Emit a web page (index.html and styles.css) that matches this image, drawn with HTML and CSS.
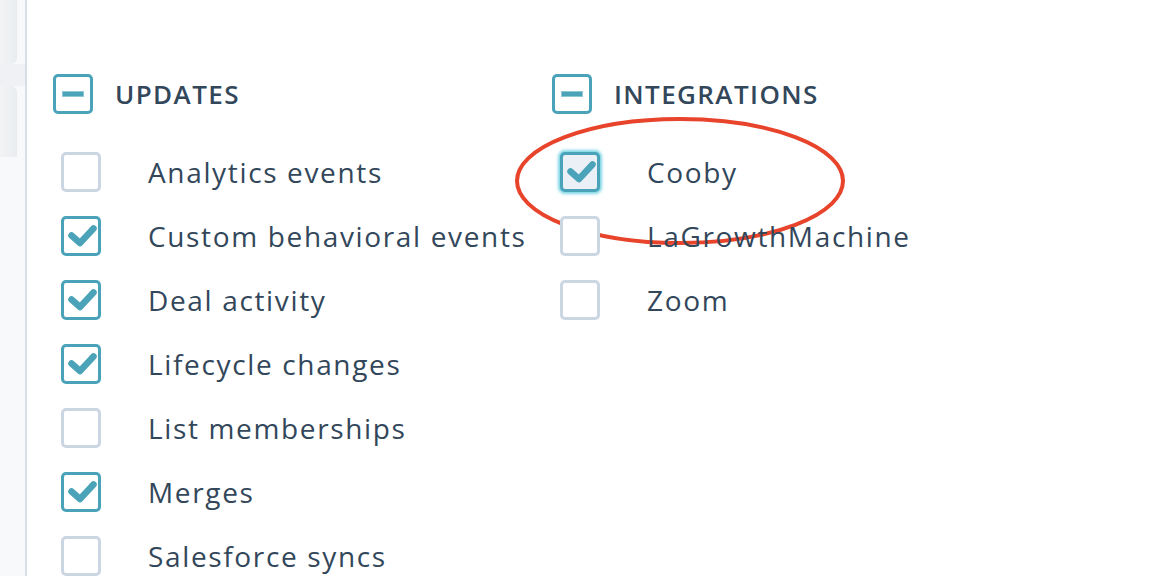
FILE: index.html
```html
<!DOCTYPE html>
<html>
<head>
<meta charset="utf-8">
<link rel="stylesheet" href="styles.css">
</head>
<body>
<div class="page">
  <aside class="rail">
    <div class="rail-card rail-card-top"></div>
    <div class="rail-tab"></div>
    <div class="rail-card rail-card-bottom"></div>
  </aside>
  <main class="content">
    <section class="group group-updates">
      <div class="group-head">
        <span class="box box-mixed"><span class="dash"></span></span>
        <span class="group-title">UPDATES</span>
      </div>
      <ul class="items">
        <li class="item"><span class="box"></span><span class="label">Analytics events</span></li>
        <li class="item"><span class="box box-on"><svg viewBox="0 0 40 40"><path d="M10.5 19.5 L19 27 L32.5 12.5"/></svg></span><span class="label">Custom behavioral events</span></li>
        <li class="item"><span class="box box-on"><svg viewBox="0 0 40 40"><path d="M10.5 19.5 L19 27 L32.5 12.5"/></svg></span><span class="label">Deal activity</span></li>
        <li class="item"><span class="box box-on"><svg viewBox="0 0 40 40"><path d="M10.5 19.5 L19 27 L32.5 12.5"/></svg></span><span class="label">Lifecycle changes</span></li>
        <li class="item"><span class="box"></span><span class="label">List memberships</span></li>
        <li class="item"><span class="box box-on"><svg viewBox="0 0 40 40"><path d="M10.5 19.5 L19 27 L32.5 12.5"/></svg></span><span class="label">Merges</span></li>
        <li class="item"><span class="box"></span><span class="label">Salesforce syncs</span></li>
      </ul>
    </section>
    <section class="group group-integrations">
      <div class="group-head">
        <span class="box box-mixed"><span class="dash"></span></span>
        <span class="group-title">INTEGRATIONS</span>
      </div>
      <ul class="items">
        <li class="item item-marked"><span class="box box-on box-focus"><svg viewBox="0 0 40 40"><path d="M10.5 19.5 L19 27 L32.5 12.5"/></svg></span><span class="label">Cooby</span>
          <svg class="circle" viewBox="0 0 340 138"><ellipse cx="170" cy="69" rx="163" ry="62"/></svg>
        </li>
        <li class="item"><span class="box"></span><span class="label">LaGrowthMachine</span></li>
        <li class="item"><span class="box"></span><span class="label">Zoom</span></li>
      </ul>
    </section>
  </main>
</div>
</body>
</html>
```

FILE: styles.css
```css
* { box-sizing: border-box; }
html, body { margin: 0; padding: 0; background: #fff; }
body {
  width: 1170px;
  height: 576px;
  overflow: hidden;
  font-family: "Open Sans", "Noto Sans", sans-serif;
  color: #33475b;
}
.page {
  display: flex;
  height: 576px;
}
.rail {
  width: 27px;
  flex: none;
  background: #f8f9fa;
  border-right: 2px solid #d6dee8;
  display: flex;
  flex-direction: column;
}
.rail-card {
  width: 17px;
  background: linear-gradient(90deg, #f3f4f6 0%, #e9ecef 100%);
}
.rail-card-top { height: 64px; border-bottom-right-radius: 6px; }
.rail-tab { height: 22px; width: 25px; background: #eff1f4; }
.rail-card-bottom { height: 71px; border-top-right-radius: 6px; }
.content {
  flex: 1;
  display: flex;
  padding: 74px 0 0 26px;
}
.group { display: flex; flex-direction: column; }
.group-updates { width: 499px; }
.group-head {
  display: flex;
  align-items: center;
  gap: 22px;
  height: 40px;
}
.group-title {
  font-size: 26px;
  font-weight: 600;
  letter-spacing: 1.4px;
  line-height: 40px;
}
.items {
  list-style: none;
  margin: 26px 0 0 8px;
  padding: 0;
}
.item {
  position: relative;
  display: flex;
  align-items: center;
  gap: 47px;
  height: 64px;
}
.label {
  font-size: 28px;
  line-height: 40px;
  letter-spacing: 1.65px;
  white-space: nowrap;
}
.box {
  width: 40px;
  height: 40px;
  flex: none;
  border: 3px solid #cbd6e2;
  border-radius: 5px;
  background: #fff;
  display: flex;
  align-items: center;
  justify-content: center;
}
.box svg {
  width: 40px;
  height: 40px;
  margin: -3px;
  fill: none;
  stroke: #4aa3b9;
  stroke-width: 6.5;
  stroke-linecap: round;
  stroke-linejoin: round;
}
.box-on, .box-mixed { border-color: #4aa3b9; }
.box-focus {
  background: #eaf0f6;
  box-shadow: 0 0 3px 2px #7fd6e6;
}
.dash {
  width: 22px;
  height: 6px;
  background: #4aa3b9;
  border: 1px solid #8ec8d6;
}
.circle {
  position: absolute;
  left: -50px;
  top: -28px;
  width: 340px;
  height: 138px;
  fill: none;
  stroke: #e8432b;
  stroke-width: 4;
  overflow: visible;
}
```
